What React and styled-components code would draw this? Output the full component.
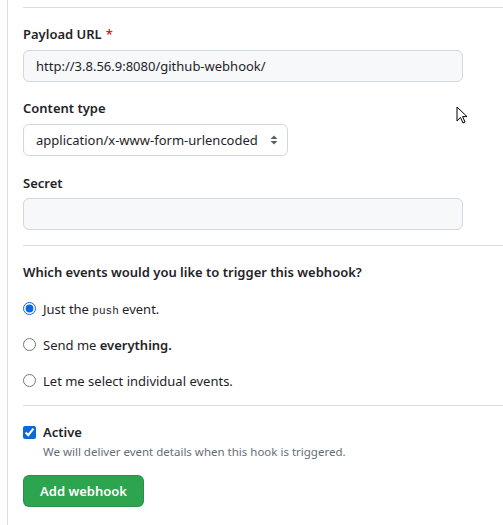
import React from "react";
import styled, { createGlobalStyle } from "styled-components";

const GlobalStyle = createGlobalStyle`
  html, body {
    margin: 0;
    padding: 0;
    background: #ffffff;
    overflow: hidden;
  }
  body {
    font-family: "Noto Sans", "Open Sans", sans-serif;
    font-size: 13px;
    color: #1f2328;
  }
`;

const Page = styled.div`
  position: relative;
  margin-left: 7px;
  min-height: 525px;
  border-left: 1px solid #d8dee4;
  padding: 7px 0 0 15px;
  box-sizing: border-box;
`;

const Rule = styled.hr`
  margin: 0;
  border: 0;
  border-top: 1px solid #d8dee4;
`;

const Field = styled.div`
  display: flex;
  flex-direction: column;
  gap: ${(p) => p.$gap || 6}px;
  margin-top: ${(p) => p.$top || 16}px;
`;

const Label = styled.label`
  font-size: 13px;
  font-weight: 600;
  line-height: 20px;
`;

const Required = styled.span`
  color: #cf222e;
  margin-left: 4px;
`;

const TextInput = styled.input`
  width: 440px;
  height: 32px;
  box-sizing: border-box;
  padding: 0 12px;
  font: inherit;
  font-size: 13px;
  color: #1f2328;
  background: #f6f8fa;
  border: 1px solid #d0d7de;
  border-radius: 6px;
  outline: none;
`;

const SelectBox = styled.div`
  display: flex;
  align-items: center;
  width: 265px;
  height: 32px;
  box-sizing: border-box;
  padding: 0 9px 0 12px;
  gap: 6px;
  border: 1px solid #d0d7de;
  border-radius: 6px;
  background: #ffffff;
  font-size: 13px;
`;

const SelectText = styled.span`
  flex: 1;
  white-space: nowrap;
`;

const Spacer = styled.div`
  height: ${(p) => p.$h}px;
`;

const Heading = styled.div`
  margin-top: 16px;
  font-size: 13px;
  font-weight: 600;
  line-height: 20px;
`;

const Options = styled.div`
  display: flex;
  flex-direction: column;
  gap: 15px;
  margin-top: 16px;
  margin-bottom: 14px;
`;

const Option = styled.label`
  display: flex;
  align-items: center;
  gap: 7px;
  height: 21px;
  font-size: 13px;
`;

const Radio = styled.input`
  margin: 0;
  width: 13px;
  height: 13px;
  accent-color: #0969da;
`;

const Code = styled.code`
  font-family: "Liberation Mono", "DejaVu Sans Mono", monospace;
  font-size: 11px;
`;

const Strong = styled.b`
  font-weight: 600;
`;

const ActiveBlock = styled.div`
  margin-top: 16px;
  display: flex;
  flex-direction: column;
`;

const CheckRow = styled.label`
  display: flex;
  align-items: center;
  gap: 7px;
  font-size: 13px;
  font-weight: 600;
  line-height: 20px;
`;

const Note = styled.div`
  margin-left: 20px;
  font-size: 11.5px;
  color: #656d76;
  line-height: 20px;
`;

const Button = styled.button`
  margin-top: 13px;
  align-self: flex-start;
  width: 121px;
  height: 32px;
  padding: 0;
  font: inherit;
  font-size: 13px;
  font-weight: 600;
  color: #ffffff;
  background: #2da44e;
  border: 1px solid rgba(27, 31, 36, 0.15);
  border-radius: 6px;
`;

const Cursor = styled.svg`
  position: absolute;
  left: 448px;
  top: 106px;
`;

const Chevrons = () => (
  <svg width="8" height="12" viewBox="0 0 8 12">
    <path d="M4 1.5 L7.5 5 H0.5 Z" fill="#57606a" />
    <path d="M4 10.5 L7.5 7 H0.5 Z" fill="#57606a" />
  </svg>
);

export default function App() {
  return (
    <>
      <GlobalStyle />
      <Page>
        <Rule />
        <Field $top={16}>
          <Label>
            Payload URL<Required>*</Required>
          </Label>
          <TextInput defaultValue="http://3.8.56.9:8080/github-webhook/" />
        </Field>
        <Field $top={16}>
          <Label>Content type</Label>
          <SelectBox>
            <SelectText>application/x-www-form-urlencoded</SelectText>
            <Chevrons />
          </SelectBox>
        </Field>
        <Field $top={17} $gap={5}>
          <Label>Secret</Label>
          <TextInput />
        </Field>
        <Spacer $h={15} />
        <Rule />
        <Heading>Which events would you like to trigger this webhook?</Heading>
        <Options>
          <Option>
            <Radio type="radio" name="ev" defaultChecked />
            <span>
              Just the <Code>push</Code> event.
            </span>
          </Option>
          <Option>
            <Radio type="radio" name="ev" />
            <span>
              Send me <Strong>everything.</Strong>
            </span>
          </Option>
          <Option>
            <Radio type="radio" name="ev" />
            <span>Let me select individual events.</span>
          </Option>
        </Options>
        <Rule />
        <ActiveBlock>
          <CheckRow>
            <Radio type="checkbox" defaultChecked />
            Active
          </CheckRow>
          <Note>We will deliver event details when this hook is triggered.</Note>
          <Button>Add webhook</Button>
        </ActiveBlock>
        <Cursor width="14" height="20" viewBox="0 0 14 20">
          <path
            d="M1 1 L1 15 L4.5 11.5 L7 17 L9 16 L6.6 10.6 L11 10.6 Z"
            fill="#ffffff"
            stroke="#000000"
            strokeWidth="1"
            strokeLinejoin="round"
          />
        </Cursor>
      </Page>
    </>
  );
}
